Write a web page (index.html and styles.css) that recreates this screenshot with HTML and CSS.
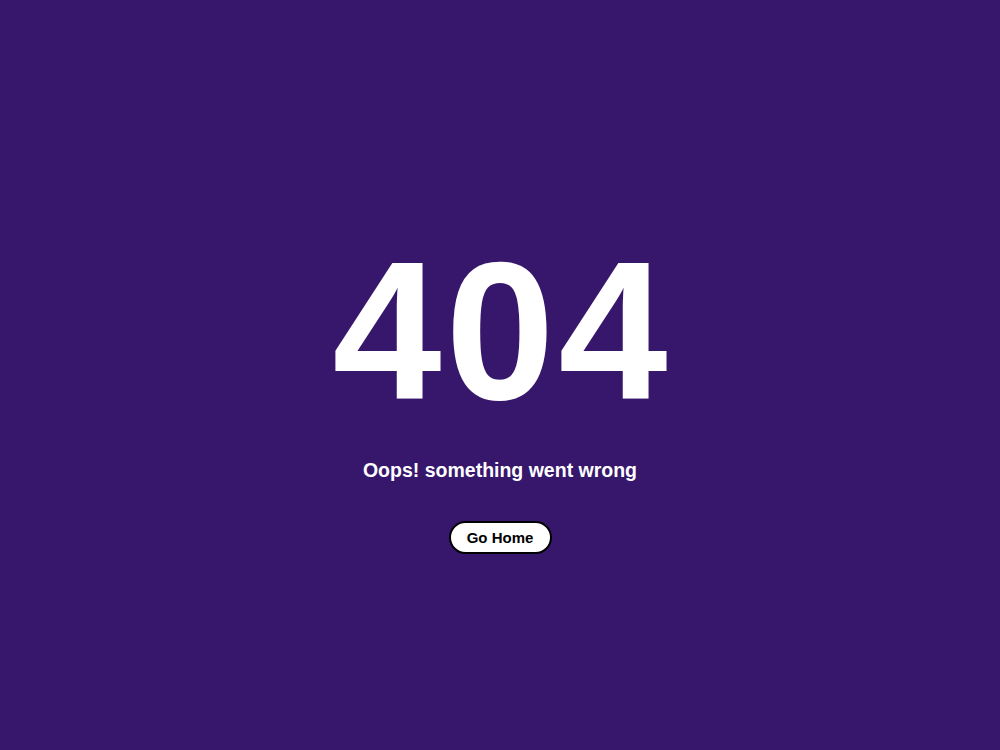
FILE: index.html
```html
<!DOCTYPE html>
<html>
  <head>
    <meta charset="utf-8" />
    <title>404</title>
    <meta name="viewport" content="width=device-width, initial-scale=1" />
    <link rel="stylesheet" href="styles.css">
  </head>

  <body>
    <div class="container">
      <h1 class="code">404</h1>
      <p class="msg">Oops! something went wrong</p>
      <button class="home">Go Home</button>
    </div>
  </body>
</html>
```

FILE: styles.css
```css
body {
  background: #37176c;
  margin: 0;
  font-family: "Comic Sans MS", "Liberation Sans", sans-serif;
  color: white;
}

.container {
  height: 100vh;
  display: flex;
  flex-direction: column;
  align-items: center;
  justify-content: center;
  padding-top: 38px;
  box-sizing: border-box;
}

.code {
  font-size: 196px;
  line-height: 1;
  font-weight: 700;
  letter-spacing: 4px;
  text-indent: 4px;
  margin: 0;
}

.msg {
  font-size: 19.5px;
  line-height: 24px;
  font-weight: 700;
  margin: 28px 0 39px;
}

.home {
  width: 103px;
  height: 33px;
  background: white;
  border: 2px solid black;
  border-radius: 17px;
  font-family: inherit;
  font-size: 15px;
  font-weight: 700;
  color: black;
  cursor: pointer;
}
```
